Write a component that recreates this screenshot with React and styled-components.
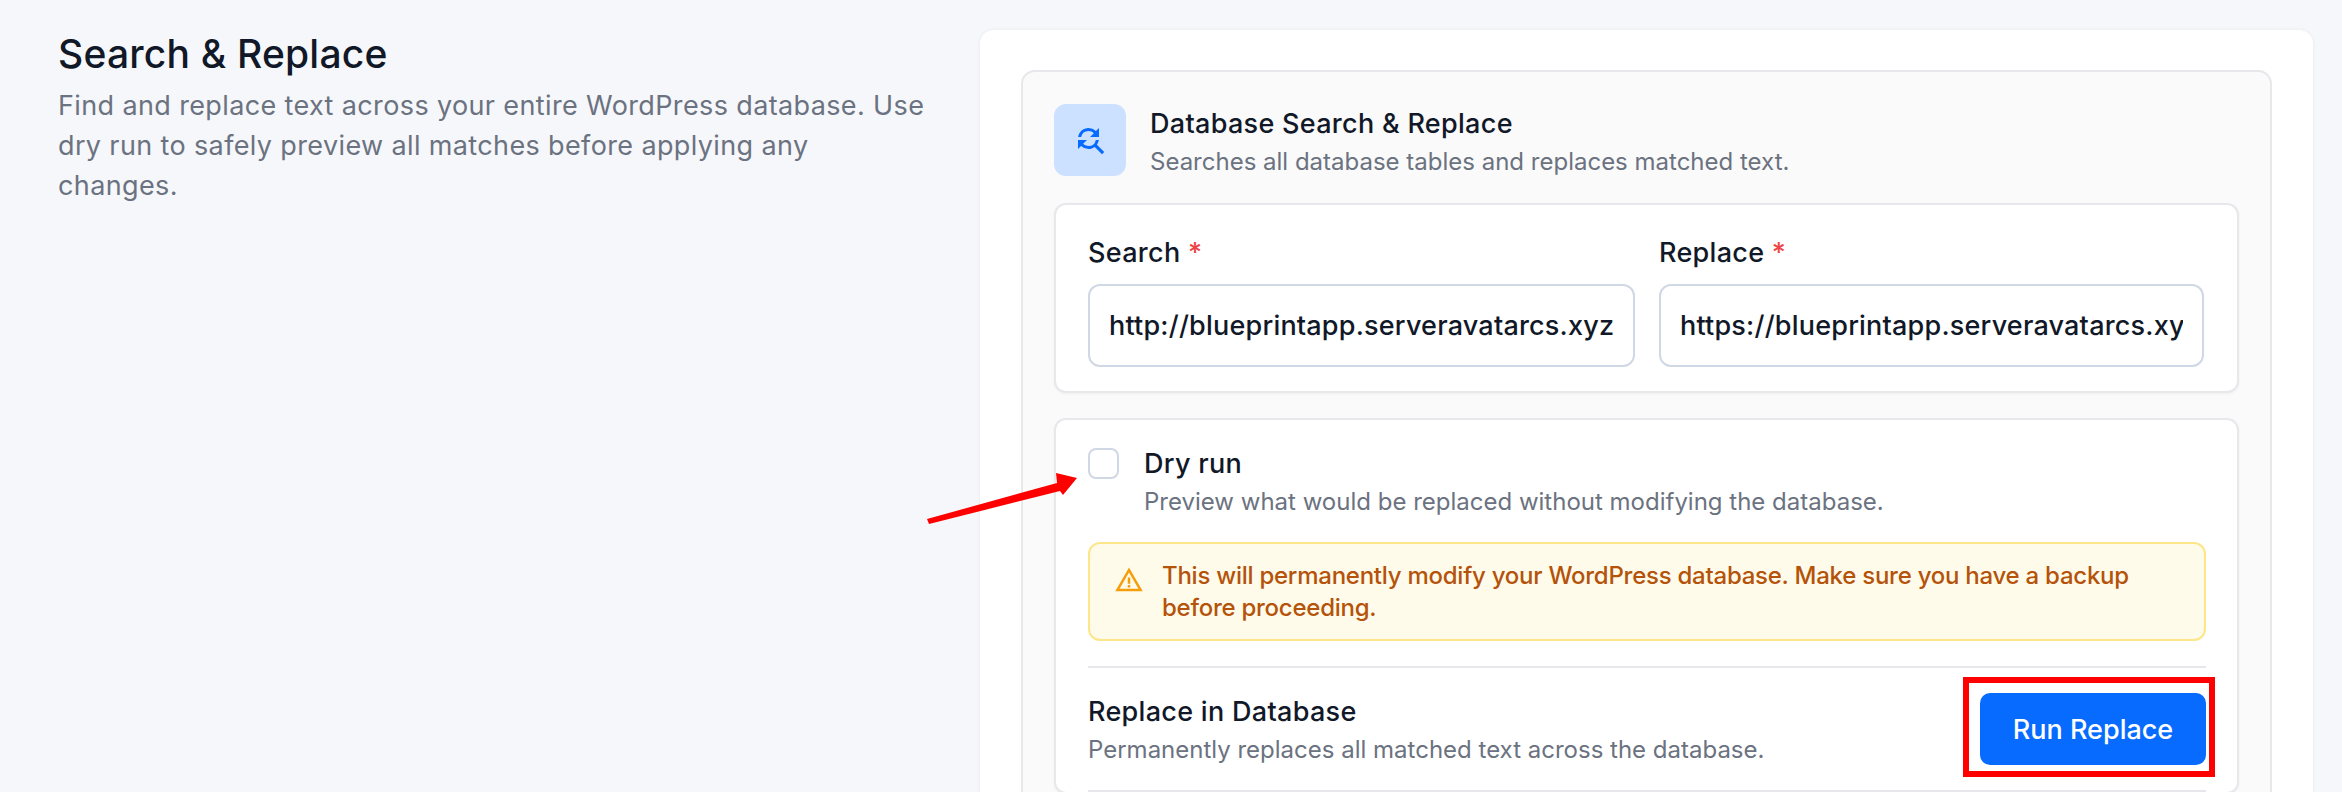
import React from 'react';
import styled, { createGlobalStyle } from 'styled-components';
import { MdFindReplace, MdWarningAmber } from 'react-icons/md';

const GlobalStyle = createGlobalStyle`
  html, body {
    margin: 0;
    padding: 0;
    height: 792px;
    overflow: hidden;
    background: #f6f7fb;
  }
  * {
    box-sizing: border-box;
  }
  body {
    font-family: 'Inter', 'Noto Sans', sans-serif;
  }
`;

const Page = styled.div`
  display: flex;
  align-items: flex-start;
  height: 792px;
  overflow: hidden;
  padding: 30px 29px 0 58px;
`;

const Intro = styled.div`
  flex: 0 0 922px;
  padding-top: 2px;
`;

const Heading = styled.h1`
  margin: 0 0 10px;
  font-size: 39px;
  line-height: 44px;
  font-weight: 500;
  color: #111827;
  letter-spacing: 0.2px;
`;

const Lead = styled.p`
  margin: 0;
  width: 872px;
  font-size: 27px;
  line-height: 40px;
  color: #6b7280;
  letter-spacing: 0.37px;
`;

const Card = styled.div`
  flex: 1;
  min-height: 800px;
  padding: 40px 41px 0 41px;
  background: #fff;
  border-radius: 14px;
  box-shadow: 0 0 4px rgba(17, 24, 39, 0.06);
`;

const Panel = styled.section`
  min-height: 760px;
  padding: 32px 31px 0 31px;
  background: #fafafa;
  border: 2px solid #e7e8ec;
  border-radius: 14px;
`;

const PanelHeader = styled.header`
  display: flex;
  align-items: flex-start;
  gap: 24px;
  margin-bottom: 23px;
`;

const IconTile = styled.div`
  display: flex;
  align-items: center;
  justify-content: center;
  flex: 0 0 72px;
  height: 72px;
  border-radius: 12px;
  background: #cce1ff;
  color: #076bff;
  font-size: 36px;
`;

const Title = styled.div`
  font-size: 27px;
  line-height: 40px;
  font-weight: 500;
  color: #111827;
  letter-spacing: 0.3px;
`;

const Hint = styled.div`
  font-size: 24px;
  line-height: 36px;
  color: #6b7280;
`;

const Box = styled.div`
  position: relative;
  background: #fff;
  border: 2px solid #e7e8ec;
  border-radius: 12px;
  padding: ${(p) => p.$pad};
  margin-bottom: 25px;
  box-shadow: 0 1px 3px rgba(17, 24, 39, 0.05);
`;

const Fields = styled.div`
  display: grid;
  grid-template-columns: 547px 545px;
  gap: 24px;
`;

const Label = styled.label`
  display: block;
  margin-bottom: 11px;
  font-size: 27px;
  line-height: 40px;
  font-weight: 500;
  color: #111827;
  letter-spacing: 0.3px;

  span {
    color: #ef4444;
  }
`;

const Input = styled.input`
  display: block;
  width: 100%;
  height: 83px;
  padding: 0 19px;
  border: 2px solid #cfd8e4;
  border-radius: 12px;
  outline: none;
  background: #fff;
  font-family: inherit;
  font-size: 27px;
  font-weight: 500;
  color: #111827;
  letter-spacing: 0.2px;
`;

const CheckRow = styled.div`
  display: flex;
  align-items: flex-start;
  gap: 25px;
`;

const Checkbox = styled.span`
  flex: 0 0 31px;
  height: 31px;
  margin-top: 4px;
  background: #fff;
  border: 2px solid #cfd8e4;
  border-radius: 8px;
`;

const Warning = styled.div`
  display: flex;
  align-items: flex-start;
  gap: 18px;
  margin-top: 22px;
  padding: 16px 24px 15px 24px;
  background: #fffbeb;
  border: 2px solid #fde68a;
  border-radius: 12px;
  font-size: 24px;
  line-height: 32px;
  font-weight: 500;
  color: #b45309;
  letter-spacing: -0.25px;

  svg {
    flex: none;
    margin-top: 5px;
    color: #f59e0b;
  }
`;

const ActionRow = styled.div`
  display: flex;
  align-items: center;
  justify-content: space-between;
  height: 126px;
  margin-top: 25px;
  border-top: 2px solid #e5e7eb;
  border-bottom: 2px solid #e5e7eb;
`;

const ActionText = styled.div`
  margin-top: 2px;
`;

const ButtonWrap = styled.div`
  position: relative;
`;

const RunButton = styled.button`
  display: block;
  width: 226px;
  height: 72px;
  border: 0;
  border-radius: 10px;
  background: #076bff;
  color: #fff;
  font-family: inherit;
  font-size: 27px;
  font-weight: 500;
`;

const RedFrame = styled.div`
  position: absolute;
  inset: -16px -9px -12px -17px;
  border: 6px solid #ff0000;
  pointer-events: none;
`;

const Arrow = styled.svg`
  position: absolute;
  left: -136px;
  top: 40px;
  width: 170px;
  height: 70px;
  pointer-events: none;
`;

export default function App() {
  return (
    <>
      <GlobalStyle />
      <Page>
        <Intro>
          <Heading>Search &amp; Replace</Heading>
          <Lead>
            Find and replace text across your entire WordPress database. Use dry
            run to safely preview all matches before applying any changes.
          </Lead>
        </Intro>
        <Card>
          <Panel>
            <PanelHeader>
              <IconTile>
                <MdFindReplace />
              </IconTile>
              <div>
                <Title>Database Search &amp; Replace</Title>
                <Hint>Searches all database tables and replaces matched text.</Hint>
              </div>
            </PanelHeader>

            <Box $pad="28px 33px 24px 32px">
              <Fields>
                <div>
                  <Label>
                    Search <span>*</span>
                  </Label>
                  <Input readOnly value="http://blueprintapp.serveravatarcs.xyz" />
                </div>
                <div>
                  <Label>
                    Replace <span>*</span>
                  </Label>
                  <Input readOnly value="https://blueprintapp.serveravatarcs.xyz" />
                </div>
              </Fields>
            </Box>

            <Box $pad="24px 31px 0 32px">
              <Arrow viewBox="0 0 170 70">
                <polygon points="7,59 137,23 136,13 157,18 143,35 140,31 9,64" fill="#ff0000" />
              </Arrow>
              <CheckRow>
                <Checkbox />
                <div>
                  <Title>Dry run</Title>
                  <Hint>Preview what would be replaced without modifying the database.</Hint>
                </div>
              </CheckRow>
              <Warning>
                <MdWarningAmber size={30} />
                <div>
                  This will permanently modify your WordPress database. Make sure you
                  have a backup before proceeding.
                </div>
              </Warning>
              <ActionRow>
                <ActionText>
                  <Title>Replace in Database</Title>
                  <Hint>Permanently replaces all matched text across the database.</Hint>
                </ActionText>
                <ButtonWrap>
                  <RunButton>Run Replace</RunButton>
                  <RedFrame />
                </ButtonWrap>
              </ActionRow>
            </Box>
          </Panel>
        </Card>
      </Page>
    </>
  );
}
